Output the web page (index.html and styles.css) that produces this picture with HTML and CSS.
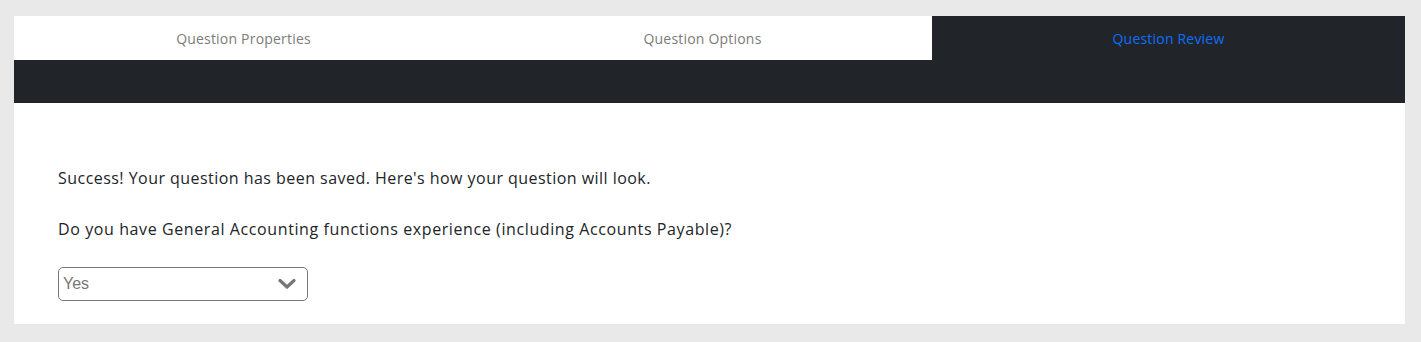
FILE: index.html
```html
<!DOCTYPE html>
<html lang="en">
<head>
    <meta charset="UTF-8">
    <meta name="viewport" content="width=device-width, initial-scale=1.0">
    <title>Question Review</title>
    <link rel="stylesheet" href="styles.css">
</head>
<body>
    <div class="card">
        <nav class="tabs">
            <a class="tab">Question Properties</a>
            <a class="tab">Question Options</a>
            <a class="tab active">Question Review</a>
        </nav>
        <div class="tab-bar"></div>

        <div class="review">
            <p class="success">Success! Your question has been saved. Here's how your question will look.</p>
            <p class="question">Do you have General Accounting functions experience (including Accounts Payable)?</p>
            <div class="select">
                <span>Yes</span>
                <svg width="18" height="12" viewBox="0 0 18 12">
                    <path d="M2 2.5 L9 9 L16 2.5" fill="none" stroke="#777" stroke-width="3.2" stroke-linecap="round" stroke-linejoin="round"/>
                </svg>
            </div>
        </div>
    </div>
</body>
</html>
```

FILE: styles.css
```css
body {
    margin: 0;
    padding: 16px 16px 18px 14px;
    background: #e9e9e9;
    font-family: "Open Sans", Arial, sans-serif;
    color: #212529;
}

.card {
    background: white;
}

.tabs {
    display: grid;
    grid-template-columns: 459px 459px 1fr;
    height: 44px;
}

.tab {
    display: flex;
    align-items: center;
    justify-content: center;
    font-size: 14px;
    letter-spacing: 0.2px;
    color: #7b7b7b;
    cursor: pointer;
}

.tab.active {
    background: #212529;
    color: #0d6efd;
}

.tab-bar {
    background: #212529;
    height: 43px;
}

.review {
    padding: 63px 44px 23px;
}

.review p {
    margin: 0;
    font-size: 16px;
    line-height: 24px;
}

.success {
    letter-spacing: 0.46px;
    margin-bottom: 27px !important;
}

.question {
    letter-spacing: 0.6px;
    margin-bottom: 26px !important;
}

.select {
    height: 32px;
    border: 1px solid #777;
    border-radius: 5px;
    display: flex;
    align-items: center;
    justify-content: space-between;
    padding: 0 11px 0 4px;
    box-sizing: content-box;
    width: 233px;
    font-family: "Liberation Sans", Arial, sans-serif;
    font-size: 16px;
    color: #777;
}
```
